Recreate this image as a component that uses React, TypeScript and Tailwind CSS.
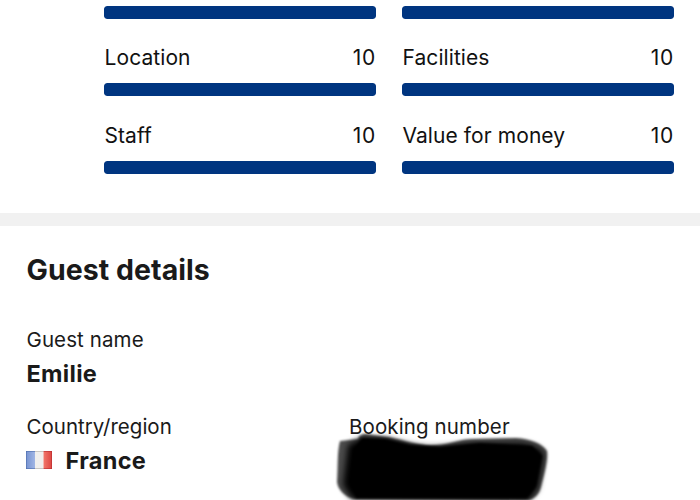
import React from 'react';

interface ScoreProps {
  label: string;
  value: number;
}

const scores: ScoreProps[] = [
  { label: 'Location', value: 10 },
  { label: 'Facilities', value: 10 },
  { label: 'Staff', value: 10 },
  { label: 'Value for money', value: 10 },
];

const Bar: React.FC<{ value: number }> = ({ value }) => (
  <div className="h-[13px] w-full rounded-[3px] overflow-hidden">
    <div className="h-full rounded-[3px] bg-[#003580]" style={{ width: `${value * 10}%` }} />
  </div>
);

const Score: React.FC<ScoreProps> = ({ label, value }) => (
  <div className="flex flex-col">
    <div className="flex justify-between pl-[0.5px] h-[31px] leading-[30px] text-[21px] tracking-[0.08px] text-[#111]">
      <span>{label}</span>
      <span className="tracking-[0.7px]">{value}</span>
    </div>
    <div className="mt-[9.4px]">
      <Bar value={value} />
    </div>
  </div>
);

const FrenchFlag = () => (
  <svg width="26" height="18" viewBox="0 0 26 18" className="shrink-0 mb-0.5">
    <defs>
      <linearGradient id="blue" x1="0" x2="1">
        <stop offset="0" stopColor="#7592d0" />
        <stop offset="1" stopColor="#a1b6e5" />
      </linearGradient>
      <linearGradient id="red" x1="0" x2="1">
        <stop offset="0" stopColor="#f2776a" />
        <stop offset="1" stopColor="#dc4540" />
      </linearGradient>
    </defs>
    <rect width="9" height="18" fill="url(#blue)" />
    <rect x="9" width="8.5" height="18" fill="#f0efed" />
    <rect x="17.5" width="8.5" height="18" fill="url(#red)" />
    <path d="M0 .5h9M0 17.5h9M.5 0v18" stroke="#4c6dac" strokeOpacity=".6" />
    <path d="M9 .5h8.5M9 17.5h8.5" stroke="#c9c7c3" />
    <path d="M17.5 .5H26M17.5 17.5H26M25.5 0v18" stroke="#b72d30" strokeOpacity=".6" />
  </svg>
);

// Marker stroke that hides the booking number
const Redaction = () => (
  <svg width="220" height="74" viewBox="330 430 220 74" className="absolute -left-[19px] top-[18px]">
    <defs>
      <filter id="soft" x="-10%" y="-20%" width="120%" height="140%">
        <feGaussianBlur stdDeviation="1.3" />
      </filter>
      <filter id="softer" x="-10%" y="-20%" width="120%" height="140%">
        <feGaussianBlur stdDeviation="3" />
      </filter>
    </defs>
    <path
      d="M340 441 L358 439 C359 434 365 433 373 435 L389 437 C407 441 420 446 436 445 C451 444 459 439 474 439 L516 438 C531 439 543 444 547 451 C548 461 544 476 541 487 C539 495 535 498 529 500 L354 499 C345 497 338 490 337 482 C338 468 337 452 340 441Z"
      fill="#000"
      fillOpacity=".7"
      filter="url(#soft)"
    />
    <path
      d="M348 445 L362 438 L388 439 C407 444 420 448 438 447 C455 446 464 443 484 443 L521 443 C536 445 544 450 544 456 L538 488 L529 500 L352 499 L343 485Z"
      fill="#000"
      filter="url(#softer)"
    />
    <path d="M354 449 L362 438 L385 439 L410 445 L440 447 L480 443 L532 446 L542 456 L536 486 L527 498 L356 498 L350 482Z" fill="#000" filter="url(#soft)" />
  </svg>
);

export default function App() {
  return (
    <div className="w-full h-[500px] overflow-hidden bg-white text-[#1a1a1a] font-['Inter',sans-serif]">
      {/* Review scores */}
      <section className="h-[213px] pt-[5.7px] pl-[104px] pr-[26px]">
        <div className="grid grid-cols-[272px_272px] gap-x-[26px] gap-y-[24.3px]">
          <Bar value={10} />
          <Bar value={10} />
          {scores.map((score) => (
            <Score key={score.label} {...score} />
          ))}
        </div>
      </section>

      <div className="h-[13px] bg-[#f1f1f1]" />

      {/* Guest details */}
      <section className="px-[26px] pt-[26px]">
        <h2 className="h-9 pl-[0.5px] leading-9 text-[28.5px] font-bold tracking-[0.05px]">Guest details</h2>
        <div className="mt-[37px]">
          <div className="h-[30px] pl-[0.5px] leading-[30px] text-[20.5px] tracking-[0.1px]">Guest name</div>
          <div className="mt-1 h-[30px] pl-[0.5px] leading-[30px] text-[23.5px] font-bold tracking-[0.3px]">Emilie</div>
        </div>
        <div className="mt-[23px] grid grid-cols-[323px_1fr]">
          <div>
            <div className="h-[30px] pl-[0.5px] leading-[30px] text-[20.5px]">Country/region</div>
            <div className="mt-1 h-[30px] leading-[30px] flex items-center gap-[13.6px] text-[23.5px] font-bold tracking-[0.3px]">
              <FrenchFlag />
              <span>France</span>
            </div>
          </div>
          <div className="relative">
            <div className="h-[30px] leading-[30px] text-[20.5px] tracking-[0.12px]">Booking number</div>
            <Redaction />
          </div>
        </div>
      </section>
    </div>
  );
}
